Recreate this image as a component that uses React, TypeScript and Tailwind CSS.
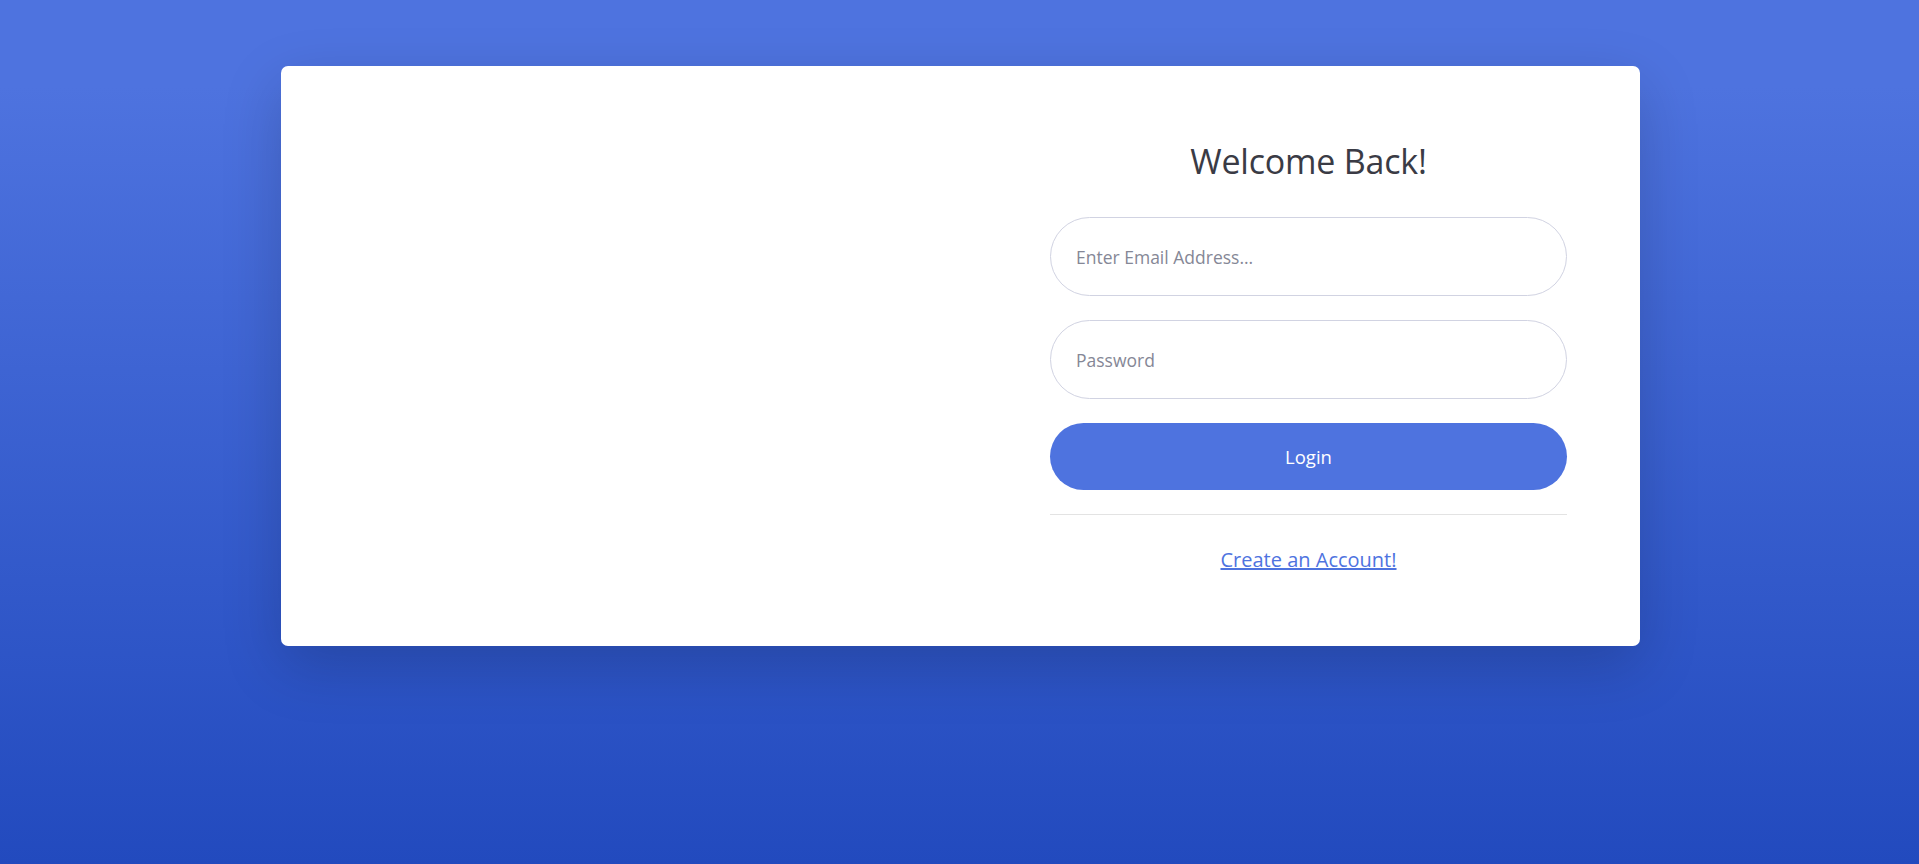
export default function App() {
  return (
    <div
      className="min-h-[864px] w-full bg-[linear-gradient(180deg,#4e73df_10%,#224abe_100%)] flex justify-center pt-[66px] pl-[2px]"
      style={{ fontFamily: '"Open Sans", "Noto Sans", sans-serif' }}
    >
      <div className="w-[1359px] h-[580px] bg-white rounded-[7px] shadow-[0_20px_60px_rgba(0,0,0,0.175)] flex">
        <div className="w-[769px]" />
        <div className="w-[517px] flex flex-col">
          <h1 className="mt-[73px] h-[44px] leading-[44px] text-center text-[34px] font-normal text-[#3a3b45] tracking-[-0.2px]">
            Welcome Back!
          </h1>
          <input
            type="email"
            placeholder="Enter Email Address..."
            className="mt-[34px] h-[79px] w-full rounded-full border border-[#d1d3e2] pl-[25px] pr-4 text-[17.5px] text-[#6e707e] placeholder:text-[#858796] outline-none"
          />
          <input
            type="password"
            placeholder="Password"
            className="mt-[24px] h-[79px] w-full rounded-full border border-[#d1d3e2] pl-[25px] pr-4 text-[17.5px] text-[#6e707e] placeholder:text-[#858796] outline-none"
          />
          <button className="mt-[24px] h-[67px] w-full rounded-full bg-[#4e73df] text-white text-[18.5px]">
            Login
          </button>
          <hr className="mt-[24px] border-0 border-t border-[#e3e3e3]" />
          <div className="mt-[32px] text-center leading-[26px]">
            <a href="#" className="text-[#4e73df] underline text-[20px]">
              Create an Account!
            </a>
          </div>
        </div>
      </div>
    </div>
  );
}
